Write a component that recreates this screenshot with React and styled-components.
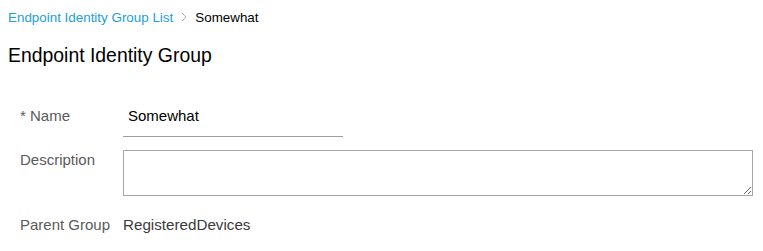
import styled, { createGlobalStyle } from "styled-components"

const Global = createGlobalStyle`
    body {
        margin: 0;
        background: #fff;
        font-family: "Liberation Sans", Arial, sans-serif;
    }
`

export default function App() {
    return (
        <Page>
            <Global />
            <Breadcrumb>
                <a>Endpoint Identity Group List</a>
                <Chevron viewBox="0 0 6 10">
                    <path d="M1 1 L5 5 L1 9" fill="none" stroke="#b3b3b3" strokeWidth="1" />
                </Chevron>
                <span>Somewhat</span>
            </Breadcrumb>

            <Title>Endpoint Identity Group</Title>

            <Form>
                <Row>
                    <Label $offset={5}>* Name</Label>
                    <TextInput defaultValue="Somewhat" />
                </Row>
                <Row $space={13}>
                    <Label>Description</Label>
                    <TextArea />
                </Row>
                <Row $space={19}>
                    <Label>Parent Group</Label>
                    <Value>RegisteredDevices</Value>
                </Row>
            </Form>
        </Page>
    )
}

const Page = styled.div`
    padding: 9px 8px 0;
`

const Breadcrumb = styled.div`
    display: flex;
    align-items: center;
    gap: 8px;
    font-size: 13.4px;
    height: 16px;

    a {
        color: #1ba0d7;
        cursor: pointer;
    }

    span {
        color: #000;
    }
`

const Chevron = styled.svg`
    width: 6px;
    height: 10px;
`

const Title = styled.h1`
    margin: 18px 0 0;
    font-size: 19.4px;
    font-weight: 400;
    color: #000;
    line-height: 24px;
`

const Form = styled.div`
    margin-top: 34px;
    padding-left: 12px;
    display: flex;
    flex-direction: column;
`

const Row = styled.div`
    display: flex;
    align-items: flex-start;
    margin-top: ${p => p.$space || 0}px;
`

const Label = styled.div`
    width: 103px;
    flex: none;
    font-size: 15px;
    line-height: 20px;
    color: #5a5a5a;
    margin-top: ${p => p.$offset || 0}px;
`

const TextInput = styled.input`
    width: 220px;
    height: 36px;
    box-sizing: border-box;
    border: none;
    border-bottom: 1px solid #a0a0a0;
    padding: 0 5px 7px;
    font-family: inherit;
    font-size: 15px;
    color: #000;
    outline: none;
`

const TextArea = styled.textarea`
    width: 630px;
    height: 46px;
    box-sizing: border-box;
    border: 1px solid #a6a6a6;
    font-family: inherit;
    outline: none;
    margin: 0;
`

const Value = styled.div`
    font-size: 15.2px;
    line-height: 20px;
    color: #3a3a3a;
`
